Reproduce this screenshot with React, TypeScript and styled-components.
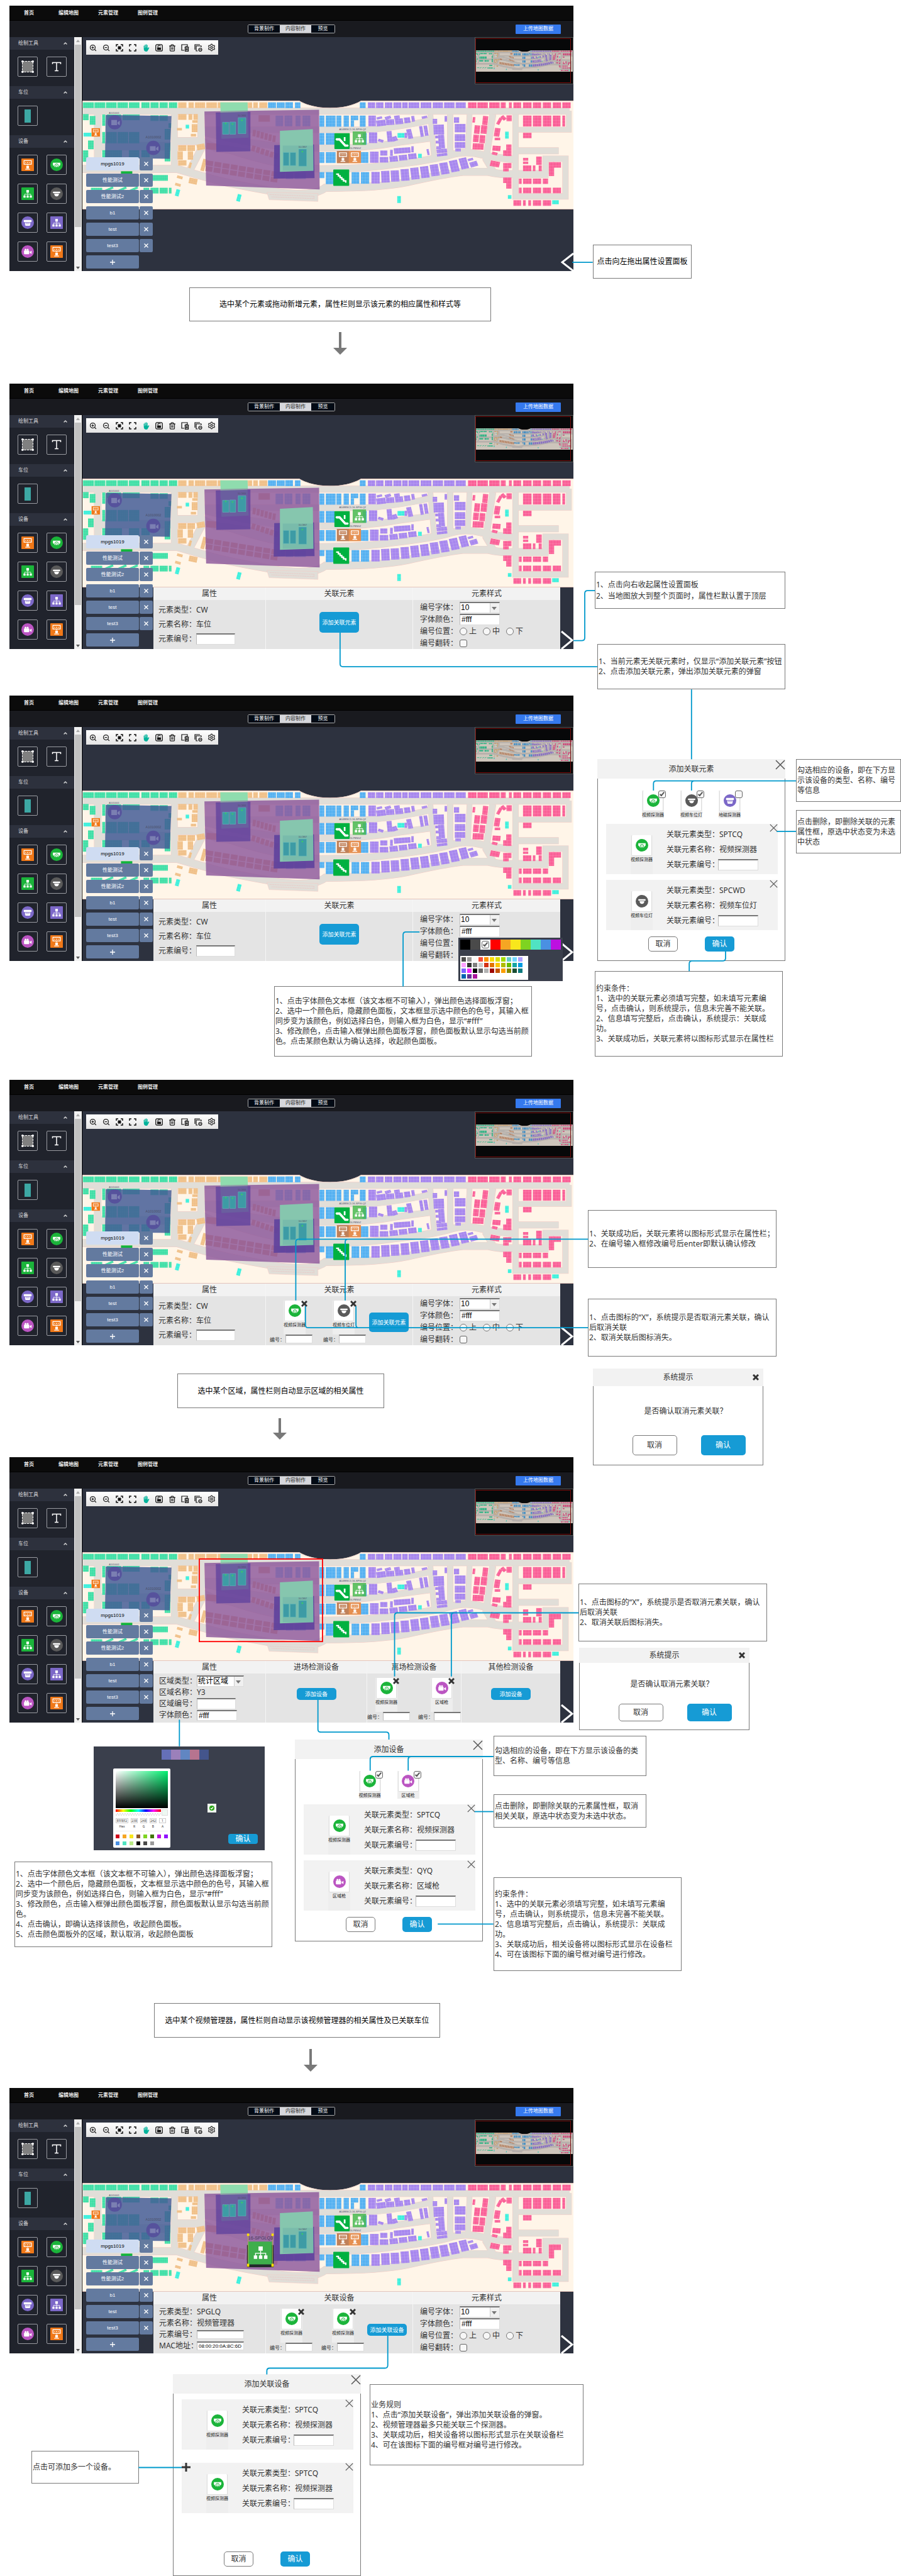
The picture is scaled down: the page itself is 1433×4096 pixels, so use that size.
import React from "react";
import styled, { createGlobalStyle, css } from "styled-components";
import { ChevronUp, Maximize, Settings, Trash2, ZoomIn, ZoomOut } from "lucide-react";

const accent = "#169bd5";
const line = "#0099cc";
const sans = `"Noto Sans", "Noto Sans CJK SC", sans-serif`;
const arial = `"Liberation Sans", "Noto Sans CJK SC", sans-serif`;

const GlobalStyle = createGlobalStyle`
  *, *::before, *::after { box-sizing: border-box; }
  body { margin: 0; background: #fff; font-family: ${sans}; font-size: 12px; line-height: 16px; color: #333; }
  button, input, select { font: inherit; color: inherit; margin: 0; padding: 0; }
  h2, h3, p, fieldset { margin: 0; padding: 0; border: 0; font-size: inherit; font-weight: inherit; }
  svg { display: block; }
`;

/* ---------- board ---------- */

const spaced = css<{ $mt?: number; $ml?: number }>`
  margin-top: ${(p) => p.$mt ?? 0}px;
  margin-left: ${(p) => p.$ml ?? 0}px;
`;

const Board = styled.main`
  position: relative;
  min-width: 1433px;
`;

const Row = styled.div<{ $mt?: number; $ml?: number }>`
  ${spaced}
  display: flex;
  align-items: flex-start;
`;

const Column = styled.div<{ $mt?: number; $ml?: number; $width?: number }>`
  ${spaced}
  display: flex;
  flex-direction: column;
  align-items: flex-start;
  flex: ${(p) => (p.$width ? `0 0 ${p.$width}px` : "1")};
`;

const Connectors = styled.svg`
  position: absolute;
  left: 0;
  top: 0;
  width: 1433px;
  height: 4096px;
  pointer-events: none;
  fill: none;
  stroke: ${line};
  stroke-width: 2;
`;

const NoteBox = styled.div<{ $mt?: number; $ml?: number; $w: number; $h: number; $center?: boolean; $loose?: boolean }>`
  ${spaced}
  display: flex;
  flex-direction: column;
  justify-content: center;
  flex: none;
  width: ${(p) => p.$w}px;
  min-height: ${(p) => p.$h}px;
  padding: 0 1px;
  border: 1px solid #797979;
  background: #fff;
  white-space: nowrap;
  line-height: ${(p) => (p.$loose ? 18 : 16)}px;
  ${(p) => p.$center && "align-items: center; color: #000;"}
`;

type NoteProps = { mt?: number; ml?: number; w: number; h: number; center?: boolean; loose?: boolean; lines: string[] };

const Note = ({ mt, ml, w, h, center, loose, lines }: NoteProps) => (
  <NoteBox $mt={mt} $ml={ml} $w={w} $h={h} $center={center} $loose={loose}>
    {lines.map((text) => (
      <p key={text}>{text}</p>
    ))}
  </NoteBox>
);

const ArrowSvg = styled.svg<{ $mt?: number; $ml?: number }>`
  ${spaced}
  fill: #797979;
`;

const DownArrow = ({ mt, ml, h }: { mt: number; ml: number; h: number }) => (
  <ArrowSvg $mt={mt} $ml={ml} width="22" height={h} viewBox={`0 0 22 ${h}`}>
    <path d={`M9 0H13V${h - 11}H22L11 ${h}L0 ${h - 11}H9Z`} />
  </ArrowSvg>
);

/* ---------- controls ---------- */

const boxed = css`
  border: 1px solid #ddd;
  border-top: 2px solid #777;
  border-left-color: #bbb;
  background: #fff;
`;

const Field = styled.input<{ $w: number; $h?: number; $small?: boolean }>`
  ${boxed}
  width: ${(p) => p.$w}px;
  height: ${(p) => p.$h ?? 18}px;
  padding: 0 2px;
  font-family: ${arial};
  font-size: ${(p) => (p.$small ? 8 : 12)}px;
  color: #000;
`;

const SelectShell = styled.span<{ $w: number }>`
  position: relative;
  display: flex;
  width: ${(p) => p.$w}px;
  &::before {
    content: "";
    position: absolute;
    right: 1px;
    top: 2px;
    width: 15px;
    height: 15px;
    border-left: 1px solid #ccc;
    background: #f0f0f0;
  }
  &::after {
    content: "";
    position: absolute;
    right: 5px;
    top: 8px;
    border: 4px solid transparent;
    border-top: 5px solid #777;
    border-bottom: 0;
  }
`;

const SelectBox = styled.select`
  ${boxed}
  appearance: none;
  width: 100%;
  height: 18px;
  padding: 0 1px;
  border-radius: 0;
  font-family: ${arial};
  line-height: 15px;
  color: #000;
`;

const Select = ({ w, value }: { w: number; value: string }) => (
  <SelectShell $w={w}>
    <SelectBox defaultValue={value}>
      <option>{value}</option>
    </SelectBox>
  </SelectShell>
);

const Radio = styled.input.attrs({ type: "radio" })`
  appearance: none;
  width: 12px;
  height: 12px;
  border: 1px solid #777;
  border-radius: 50%;
  background: #f7f7f7;
`;

const Tick = styled.input.attrs({ type: "checkbox" })`
  appearance: none;
  position: relative;
  width: 12px;
  height: 12px;
  border: 1px solid #666;
  border-radius: 3px;
  background: #f7f7f7;
  &:checked::after {
    content: "";
    position: absolute;
    left: 3px;
    top: 0;
    width: 4px;
    height: 8px;
    border: solid #555;
    border-width: 0 2px 2px 0;
    transform: rotate(40deg);
  }
`;

const Button = styled.button<{ $w: number; $h: number; $plain?: boolean; $small?: boolean; $mt?: number; $ml?: number }>`
  ${spaced}
  flex: none;
  width: ${(p) => p.$w}px;
  height: ${(p) => p.$h}px;
  border: ${(p) => (p.$plain ? "1px solid #797979" : "0")};
  border-radius: 5px;
  background: ${(p) => (p.$plain ? "#fff" : accent)};
  color: ${(p) => (p.$plain ? "#333" : "#fff")};
  font-size: ${(p) => (p.$small ? 9 : 12)}px;
  line-height: 12px;
  white-space: nowrap;
`;

const IconButton = styled.button`
  display: flex;
  border: 0;
  background: none;
`;

const Cross = ({ size }: { size: number }) => (
  <svg width={size} height={size} viewBox="0 0 16 16" stroke="#555" strokeWidth="1.5" fill="none">
    <path d="M1 1L15 15M15 1L1 15" />
  </svg>
);

const HeavyCross = () => (
  <svg width="10" height="10" viewBox="0 0 10 10" stroke="#333" strokeWidth="3" fill="none">
    <path d="M1 1L9 9M9 1L1 9" />
  </svg>
);

/* ---------- device icons ---------- */

type DeviceKind = "kiosk" | "detector" | "manager" | "lamp" | "geo" | "manager2" | "gun";

const Kiosk = () => (
  <g fill="none" stroke="#fff" strokeWidth="1.5">
    <rect x="5" y="4" width="14" height="7" />
    <path d="M7.500 7.500H9M11 7.500H13M15 7.500H16.500" />
    <path d="M9.500 14H14.500V19H9.500Z" fill="#fff" stroke="none" />
    <path d="M7.500 20.500H16.500" />
    <path d="M12 11V13" />
  </g>
);

const Tree = () => (
  <g fill="#fff">
    <path d="M9.500 5H14.500V10H9.500Z" />
    <path d="M4 15.500H8V19.500H4ZM10 15.500H14V19.500H10ZM16 15.500H20V19.500H16Z" />
    <path d="M12 10V16M6 16V13H18V16" fill="none" stroke="#fff" strokeWidth="1" />
  </g>
);

const glyphs: Record<DeviceKind, { color: string; round: boolean; art: React.ReactNode }> = {
  kiosk: { color: "#f07818", round: false, art: <Kiosk /> },
  manager: { color: "#1bb43a", round: false, art: <Tree /> },
  manager2: { color: "#7c68c8", round: false, art: <Tree /> },
  detector: {
    color: "#1bb43a",
    round: true,
    art: (
      <g>
        <path d="M5 8H19V12C19 13 18 13.500 17.500 13.500A6 6 0 0 1 6.500 13.500C6 13.500 5 13 5 12Z" fill="#fff" />
        <circle cx="12" cy="13.500" r="3.200" fill="#fff" stroke="#1bb43a" strokeWidth="1.200" />
        <circle cx="12" cy="13.500" r="1" fill="#1bb43a" />
      </g>
    ),
  },
  lamp: {
    color: "#5a5a5a",
    round: true,
    art: (
      <g fill="#fff">
        <rect x="5" y="8" width="14" height="3" rx="1" />
        <path d="M7.500 12H16.500A4.500 5 0 0 1 7.500 12Z" />
      </g>
    ),
  },
  geo: {
    color: "#7c68c8",
    round: true,
    art: (
      <g fill="#fff">
        <rect x="4.500" y="7" width="15" height="4" rx="1" />
        <path d="M7 12H9V15H10V12H11.500V15H12.500V12H14V15H15V12H17V16L16 18H8L7 16Z" />
      </g>
    ),
  },
  gun: {
    color: "#bb55c2",
    round: true,
    art: (
      <g fill="#fff">
        <rect x="5" y="10" width="10" height="7" rx="1" />
        <circle cx="8" cy="8.500" r="1.800" />
        <circle cx="12" cy="8.500" r="1.800" />
        <path d="M16 12.500L19.500 10.500V16.500L16 14.500Z" />
      </g>
    ),
  },
};

const DeviceIcon = ({ kind, size }: { kind: DeviceKind; size: number }) => (
  <svg width={size} height={size} viewBox="0 0 24 24">
    {glyphs[kind].round ? <circle cx="12" cy="12" r="12" fill={glyphs[kind].color} /> : <rect width="24" height="24" rx="1" fill={glyphs[kind].color} />}
    {glyphs[kind].art}
  </svg>
);

const TileBox = styled.span`
  position: relative;
  display: flex;
  flex-direction: column;
  align-items: center;
  width: 35px;
  background: #eee;
`;

const TileFace = styled.span`
  display: flex;
  align-items: center;
  justify-content: center;
  width: 33px;
  height: 33px;
  border: 1px solid #ddd;
  border-top: 0;
  border-radius: 2px;
  background: #fff;
`;

const TileName = styled.span`
  font-family: ${arial};
  font-size: 7px;
  line-height: 11px;
  white-space: nowrap;
  color: #222;
`;

const TileCorner = styled.span`
  position: absolute;
  right: -3px;
  top: 0;
  display: flex;
`;

const Tile = ({ kind, name, children }: { kind: DeviceKind; name: string; children?: React.ReactNode }) => (
  <TileBox>
    <TileFace>
      <DeviceIcon kind={kind} size={20} />
    </TileFace>
    <TileName>{name}</TileName>
    {children && <TileCorner>{children}</TileCorner>}
  </TileBox>
);

/* ---------- floor map ---------- */

type Block = [number, number, number, number, number?];

const leftGreen: Block[] = [
  [438, 540, 58, 30], [499, 540, 57, 30], [560, 540, 56, 30], [620, 540, 56, 30], [681, 540, 56, 30], [747, 540, 43, 30], [795, 540, 43, 30], [843, 540, 43, 30], [892, 540, 44, 30],
  [438, 602, 30, 32], [474, 612, 30, 46], [540, 604, 16, 60], [565, 604, 75, 30], [648, 604, 90, 30], [795, 608, 43, 30], [843, 608, 43, 30], [890, 650, 14, 25],
  [540, 696, 15, 60], [562, 696, 55, 60], [621, 696, 56, 60], [681, 696, 55, 60], [870, 680, 30, 56], [465, 741, 30, 46], [438, 793, 28, 60], [540, 792, 104, 40],
  [681, 792, 55, 44], [747, 792, 44, 44], [870, 755, 30, 96], [805, 923, 82, 30], [480, 990, 60, 16], [758, 990, 30, 30], [795, 990, 43, 30], [843, 990, 43, 30], [892, 990, 14, 30],
  [550, 992, 50, 12, -25], [620, 992, 50, 12, -25], [680, 992, 50, 12, -25],
];

const leftOrange: Block[] = [
  [941, 540, 44, 30], [996, 540, 28, 30], [1030, 540, 54, 30], [1090, 540, 56, 30], [1150, 540, 160, 30], [1310, 540, 22, 30], [1338, 540, 24, 30], [1370, 540, 42, 30],
  [941, 602, 44, 30], [996, 602, 20, 30], [1022, 602, 23, 30], [1016, 634, 28, 14], [1013, 655, 30, 42], [935, 675, 26, 13], [1008, 706, 28, 14],
  [941, 766, 44, 30], [990, 766, 40, 30], [1040, 760, 42, 30, -10], [938, 798, 28, 44], [992, 798, 28, 44], [941, 845, 44, 28], [998, 857, 13, 30, 15],
  [1066, 838, 20, 64, 15], [935, 928, 30, 14, 15], [925, 967, 30, 14, 15], [998, 940, 44, 30, 12],
];

const overlaidOrange: Block[] = [
  ...Array.from({ length: 9 }, (_, i): Block => [1090 + i * 43, 848 + i * 7, 36, 26, 8]),
  ...Array.from({ length: 9 }, (_, i): Block => [1086 + i * 43, 878 + i * 7, 36, 26, 8]),
  ...Array.from({ length: 6 }, (_, i): Block => [1335 + i * 21, 685 + i * 6, 16, 34, 6]),
  ...Array.from({ length: 6 }, (_, i): Block => [1330 + i * 24, 768 + i * 8, 18, 30, 14]),
  [1366, 608, 60, 34], [1090, 755, 54, 34, 5],
];

const leftBlue: Block[] = [
  [1416, 540, 42, 30], [1462, 540, 42, 30], [1508, 540, 40, 30], [1456, 610, 40, 56], [1504, 610, 40, 56],
  [1466, 905, 40, 34], [1510, 910, 40, 34], [1556, 910, 60, 34],
];

const rightBlue: Block[] = [
  [5, 441, 28, 25], [40, 441, 20, 25], [276, 441, 21, 25],
  [5, 498, 25, 46], [42, 498, 18, 46], [68, 498, 28, 46],
  [129, 498, 18, 48], [152, 498, 36, 48], [191, 498, 18, 48], [217, 498, 19, 48], [243, 498, 27, 20], [243, 518, 12, 28], [276, 498, 21, 48],
  [129, 573, 18, 50], [152, 573, 32, 50], [286, 573, 15, 50], [129, 655, 18, 47], [152, 655, 36, 47], [280, 655, 27, 47],
  [129, 741, 18, 26], [152, 741, 30, 52], [246, 741, 28, 50], [280, 741, 30, 50],
];

const rightPurple: Block[] = [
  [305, 441, 27, 25], [335, 441, 27, 25], [367, 441, 27, 25], [398, 441, 29, 25], [430, 441, 20, 25], [453, 441, 39, 25], [497, 441, 39, 25], [541, 441, 37, 25], [582, 441, 38, 25], [624, 441, 37, 25],
  [307, 498, 27, 46], [336, 517, 34, 26, -8], [337, 503, 20, 10, -15], [371, 514, 30, 24, -3], [404, 511, 29, 24, -6], [437, 506, 22, 24, -8], [464, 500, 11, 24, -8], [367, 501, 22, 12, -18], [401, 498, 20, 14, -8], [501, 500, 20, 10, -15],
  [309, 570, 30, 46], [342, 600, 20, 12, 20], [375, 565, 18, 46, -5], [392, 588, 20, 20, -20], [448, 556, 18, 42, -12], [494, 543, 12, 46, -8], [510, 541, 13, 44, -8], [438, 572, 10, 22],
  [313, 653, 31, 48], [350, 648, 26, 22], [348, 676, 31, 24], [386, 645, 10, 26], [400, 636, 60, 24, -5], [384, 672, 30, 24, -6], [418, 667, 30, 24, -6], [452, 661, 30, 24, -6], [463, 630, 9, 26], [520, 642, 8, 26, -10],
  [318, 740, 30, 50], [354, 736, 30, 50, -2], [389, 734, 30, 48, -3], [425, 728, 30, 50, -4], [461, 722, 30, 50, -6], [497, 716, 30, 50, -7], [533, 708, 30, 50, -8], [568, 700, 30, 50, -10], [604, 690, 30, 50, -12], [640, 680, 28, 48, -14], [668, 682, 20, 10, -18], [676, 696, 28, 22, -18],
  [541, 512, 16, 22], [584, 500, 9, 24], [544, 537, 38, 42, -2], [562, 580, 22, 60, -4], [550, 584, 18, 12], [552, 606, 18, 12], [554, 630, 18, 12], [555, 642, 38, 16, -6], [556, 660, 38, 12, -8],
  [618, 505, 19, 24], [621, 534, 39, 36], [621, 578, 38, 30], [621, 612, 38, 26], [623, 640, 20, 12],
];

const rightPink: Block[] = [
  [669, 441, 31, 25], [703, 441, 38, 25], [746, 441, 38, 25], [788, 441, 18, 25], [818, 441, 10, 25], [834, 441, 28, 25], [869, 441, 31, 25], [905, 441, 30, 25], [941, 441, 30, 25], [977, 441, 30, 25], [1012, 441, 30, 25],
  [686, 504, 9, 24, 5], [722, 500, 19, 38, 5], [692, 540, 20, 36, 5], [716, 540, 22, 36, 5], [688, 580, 20, 32, 4], [711, 582, 20, 34, 4], [686, 618, 40, 26, 3],
  [765, 552, 20, 36, 8], [777, 507, 12, 30, 25], [791, 498, 14, 20, -40], [809, 497, 19, 25], [766, 593, 20, 11], [758, 628, 29, 22, 5], [756, 655, 20, 12, 15], [808, 622, 19, 50], [797, 647, 12, 24],
  [750, 694, 34, 24, 12], [797, 702, 30, 22], [797, 724, 20, 14], [797, 764, 30, 24], [808, 788, 19, 24],
  [869, 498, 31, 47], [905, 498, 31, 47], [941, 498, 31, 47], [977, 498, 28, 47], [1012, 498, 10, 47], [869, 572, 31, 23],
  [869, 680, 19, 12], [869, 696, 19, 10], [917, 674, 20, 36], [869, 712, 30, 25], [905, 712, 9, 25], [926, 712, 11, 25], [977, 698, 30, 24], [963, 698, 19, 60],
  [854, 769, 10, 23], [869, 769, 31, 23], [905, 769, 30, 23], [941, 769, 19, 23], [854, 808, 10, 24], [869, 808, 30, 24], [905, 808, 30, 24], [941, 808, 30, 24], [977, 808, 30, 24],
  [834, 862, 28, 24], [869, 862, 10, 24], [888, 862, 10, 24], [905, 862, 30, 24], [941, 862, 30, 24],
];

const rightCyan: Block[] = [[413, 573, 25, 20], [804, 567, 13, 30], [488, 662, 13, 18], [412, 844, 13, 30], [814, 840, 13, 16], [975, 862, 24, 17]];
const leftCyan: Block[] = [[441, 700, 42, 20], [981, 658, 18, 20], [928, 998, 20, 36, 15], [1252, 1024, 20, 38, 15]];

const Blocks = ({ data, fill }: { data: Block[]; fill: string }) => (
  <g fill={fill}>
    {data.map(([x, y, w, h, turn], i) => (
      <rect key={i} x={x} y={y} width={w} height={h} transform={turn ? `rotate(${turn} ${x + w / 2} ${y + h / 2})` : undefined} />
    ))}
  </g>
);

const roads = [
  { w: 11, d: "M145 195.500H1003" },
  { w: 12, d: "M172 195V292" },
  { w: 14, d: "M172 257H310" },
  { w: 11, d: "M307 195V298" },
  { w: 13, d: "M145 297H312Q350 308 380 316T480 336T573 330Q670 330 718 320Q780 306 815 302H860Q880 306 890 306H966" },
  { w: 13, d: "M312 248H354L380 260Q470 270 540 298" },
  { w: 12, d: "M354 195V262L334 300" },
  { w: 10, d: "M355 228H645Q690 226 757 212" },
  { w: 11, d: "M355 232Q470 262 563 260Q640 262 704 250L757 243" },
  { w: 12, d: "M400 262Q480 290 563 297Q640 297 694 289Q757 282 791 273Q820 264 849 272Q878 278 904 280" },
  { w: 9, d: "M758 201L765 282" },
  { w: 10, d: "M793 201V272" },
  { w: 9, d: "M827 201L824 270" },
  { w: 11, d: "M868 201L856 280L868 300" },
  { w: 10, d: "M908 201V345H996V279H961V306" },
  { w: 11, d: "M908 265H984" },
  { w: 9, d: "M908 228H1002V195" },
];

const MapSymbol = () => (
  <svg width="0" height="0" aria-hidden="true" style={{ position: "absolute" }}>
    <defs>
      {[["green", "#3fdfa6"], ["orange", "#f0c088"], ["blue", "#55b1f1"], ["purple", "#a787ee"], ["pink", "#fa6097"], ["cyan", "#3cf0dc"]].map(([id, color]) => (
        <pattern key={id} id={`lot-${id}`} width="11" height="13" patternUnits="userSpaceOnUse">
          <rect width="11" height="13" fill={color} />
          <path d="M10 0V13M0 12H11" stroke="#fff" strokeOpacity=".3" strokeWidth="1" />
        </pattern>
      ))}
      <clipPath id="floor-clip">
        <path d="M145 177H527C555 194 608 194 636 177H1010V368H145Z" />
      </clipPath>
      <symbol id="floor-map" viewBox="145 177 865 191" preserveAspectRatio="none">
        <g clipPath="url(#floor-clip)">
          <rect x="145" y="177" width="865" height="191" fill="#fff5e8" />
          {roads.map((r) => (
            <path key={r.d} d={r.d} fill="none" stroke="#f3c9c3" strokeWidth={r.w + 1} />
          ))}
          {roads.map((r) => (
            <path key={r.d} d={r.d} fill="none" stroke="#e1ded8" strokeWidth={r.w} />
          ))}
          <path d="M470 338L560 340V354L474 351Z" fill="#e1ded8" stroke="#f3c9c3" strokeWidth=".6" />
          <path d="M475 342L553 345V349L478 346" fill="none" stroke="#f0b5b5" strokeWidth=".6" strokeDasharray="2 1" />
          <g transform="scale(.33333)">
            <Blocks data={leftGreen} fill="url(#lot-green)" />
            <Blocks data={leftOrange} fill="url(#lot-orange)" />
            <Blocks data={overlaidOrange} fill="#e09a70" />
            <Blocks data={leftBlue} fill="url(#lot-blue)" />
            <Blocks data={leftCyan} fill="url(#lot-cyan)" />
          </g>
          <g transform="translate(500 0) scale(.4847 .4082)">
            <Blocks data={rightBlue} fill="url(#lot-blue)" />
            <Blocks data={rightPurple} fill="url(#lot-purple)" />
            <Blocks data={rightPink} fill="url(#lot-pink)" />
            <Blocks data={rightCyan} fill="url(#lot-cyan)" />
          </g>
          <path d="M145 177.500H527C555 194 608 194 636 177.500H1010M145 367.500H1010" fill="none" stroke="#e0bdb5" />
        </g>
      </symbol>
      <symbol id="floor-overlays" viewBox="145 177 865 191" preserveAspectRatio="none">
        <path d="M388 180H436L438 242L390 244Z" fill="#8fdcae" />
        <path d="M360 196L562 193L563 333L363 326Z" fill="#8f5a9c" opacity=".84" />
        <path d="M388 196L436 196L438 242L390 244Z" fill="#8fdcae" opacity=".6" />
        <path d="M380 198L441 196.500V266L381 267Z" fill="#5b3f9c" opacity=".72" />
        <path d="M483 255L553 254L554 313L482 314Z" fill="#5b3f9c" opacity=".85" />
        <path d="M493 230L551 227L552 300L493 302Z" fill="#86c6ae" />
        <path d="M498 256H552V300H498Z" fill="#62a5a5" opacity=".35" />
        <g fill="#3d9ba5" stroke="#67bcbc" strokeWidth=".6">
          <path d="M392 215H403V236H392ZM404.500 214.500H415V236H404.500ZM419.500 207H433V235H419.500ZM499 268H509V291H499ZM511 268H521V291H511ZM526 262H540V292H526Z" />
        </g>
        <g fill="#3cc86a">
          <circle cx="397.500" cy="217" r="1.300" />
          <circle cx="409.500" cy="218" r="1.300" />
          <circle cx="426" cy="211.500" r="1.500" />
          <circle cx="532.500" cy="266.500" r="1.500" />
        </g>
        <path d="M186 202L302 204L299 279L185 278Z" fill="#435a95" opacity=".84" />
        <g fill="#56529c">
          <circle cx="202" cy="215" r="12.500" />
          <circle cx="270" cy="260" r="12.500" />
        </g>
        <g fill="#7b7fb2">
          <path d="M196 211H206V220H196ZM207 215L211 212V220L207 218ZM264 257H274V265H264ZM275 260L279 257V265L275 263Z" />
        </g>
        <g fontFamily="Liberation Sans" textAnchor="middle" fill="#4a4f68">
          <text x="201" y="200.500" fontSize="4">A1010001</text>
          <text x="270" y="243" fontSize="6">A1010002</text>
          <text x="426" y="205" fontSize="3.500">16-CW06</text>
          <text x="533" y="259.500" fontSize="3.500">16-CW07</text>
          <text x="621" y="228.500" fontSize="4.500">A1488SC5 16-SPGLQ2</text>
          <text x="626" y="262.500" fontSize="4">16-PBNGZ</text>
        </g>
        <svg x="161" y="225" width="15" height="15.500" viewBox="0 0 24 24"><rect width="24" height="24" fill="#f07818" /><Kiosk /></svg>
        <rect x="213" y="301" width="20" height="7" fill="#12b53c" />
        <svg x="621" y="231" width="24" height="24" viewBox="0 0 24 24"><rect width="24" height="24" fill="#49b950" opacity=".85" /><Tree /></svg>
        <svg x="593" y="265" width="22" height="22" viewBox="0 0 24 24"><rect width="24" height="24" fill="#c08058" /><Kiosk /></svg>
        <svg x="614" y="265" width="22" height="22" viewBox="0 0 24 24"><rect width="24" height="24" fill="#e58f50" /><Kiosk /></svg>
        <rect x="589" y="234" width="27" height="28" rx="1" fill="#00b140" />
        <path d="M593 245H598L608 256H612" fill="none" stroke="#fff" strokeWidth="4" strokeLinecap="round" />
        <path d="M607 241V248" stroke="#fff" strokeWidth="3" />
        <rect x="587" y="298" width="28" height="28.500" rx="1" fill="#00b140" />
        <path d="M592 306H596V309H599V312H602V315H605V318H609V321" fill="none" stroke="#fff" strokeWidth="2.500" />
      </symbol>
    </defs>
  </svg>
);

/* ---------- editor shell ---------- */

const EditorFrame = styled.section<{ $mt?: number; $ml?: number }>`
  ${spaced}
  display: flex;
  flex-direction: column;
  flex: none;
  width: 897px;
  height: 422px;
  background: #2d323f;
  font-family: ${arial};
  overflow: visible;
`;

const NavBar = styled.nav`
  display: flex;
  align-items: center;
  gap: 31px;
  height: 24px;
  padding-left: 23px;
  background: #0b0b0b;
  border-bottom: 1px solid #000;
`;

const NavLink = styled.a`
  min-width: 24px;
  color: #eee;
  font-size: 8px;
  line-height: 12px;
  font-weight: 700;
  text-decoration: none;
`;

const ModeBar = styled.div`
  display: flex;
  align-items: center;
  justify-content: space-between;
  height: 26px;
  padding: 0 20px 0 379px;
  background: #191a1f;
`;

const Tabs = styled.div`
  display: flex;
  border: 1px solid #aaa;
  border-radius: 2px;
`;

const Tab = styled.button<{ $on?: boolean; $w: number }>`
  width: ${(p) => p.$w}px;
  height: 12px;
  border: 0;
  background: ${(p) => (p.$on ? "#d6d7dc" : "#020a14")};
  color: ${(p) => (p.$on ? "#222" : "#fff")};
  font-size: 8px;
  line-height: 10px;
`;

const Upload = styled.button`
  width: 72px;
  height: 15px;
  border: 0;
  border-radius: 1px;
  background: #3579ee;
  color: #fff;
  font-size: 8px;
  line-height: 10px;
`;

const Workspace = styled.div`
  display: flex;
  flex: 1;
  min-height: 0;
`;

const Sidebar = styled.aside`
  width: 103px;
  background: #20232c;
`;

const GroupTitle = styled.h3`
  display: flex;
  align-items: center;
  justify-content: space-between;
  height: 20px;
  padding: 0 10px 0 14px;
  background: #2d313d;
  color: #ddd;
  font-size: 8px;
  line-height: 12px;
`;

const ToolGrid = styled.div`
  display: grid;
  grid-template-columns: 32px 32px;
  grid-auto-rows: 32px;
  gap: 14px;
  padding: 11px 13px 15px;
`;

const ToolButton = styled.button`
  display: flex;
  align-items: center;
  justify-content: center;
  border: 1px solid #9a9ca2;
  border-radius: 2px;
  background: none;
`;

const ScrollTrack = styled.div`
  display: flex;
  flex-direction: column;
  align-items: center;
  justify-content: space-between;
  width: 12px;
  padding: 4px 0 3px;
  border-right: 1px solid #fff;
  background: #f1f1f1;
`;

const ScrollThumb = styled.div`
  flex: 1;
  width: 10px;
  margin: 4px 0 63px;
  background: #c1c1c1;
`;

const ScrollTip = styled.i<{ $down?: boolean }>`
  border: 3px solid transparent;
  ${(p) => (p.$down ? "border-top: 4px solid #555; border-bottom: 0;" : "border-bottom: 4px solid #aaa; border-top: 0;")}
`;

const Stage = styled.div`
  position: relative;
  flex: 1;
  border-left: 1px solid #000;
`;

const MapLayer = styled.svg`
  position: absolute;
  left: 0;
  top: 101px;
  width: 100%;
  height: 173px;
`;

const Toolbar = styled.div`
  position: absolute;
  left: 6px;
  top: 5px;
  display: flex;
  align-items: center;
  width: 210px;
  height: 23px;
  background: linear-gradient(#fff, #e4e4e4);
`;

const ToolbarButton = styled.button`
  display: flex;
  align-items: center;
  justify-content: center;
  flex: 1;
  height: 23px;
  border: 0;
  background: none;
  color: #222;
`;

const MiniMap = styled.div`
  position: absolute;
  right: 0;
  top: 0;
  display: flex;
  align-items: center;
  width: 157px;
  height: 75px;
  border: 1px solid #555;
  background: #070809;
  &::after {
    content: "";
    position: absolute;
    inset: 1px 3px 1px 0;
    border: 1px solid #7a0d0d;
  }
`;

const MiniSvg = styled.svg`
  width: 100%;
  height: 34px;
  opacity: 0.8;
`;

const Floors = styled.div`
  position: absolute;
  left: 6px;
  bottom: 4px;
  display: grid;
  grid-template-columns: 84px 21px;
  grid-auto-rows: 21px;
  gap: 5px 1px;
`;

const FloorButton = styled.button<{ $on?: boolean }>`
  display: flex;
  align-items: center;
  justify-content: center;
  border: 0;
  border-radius: 2px;
  background: ${(p) => (p.$on ? "#cfdcf2" : "#637a9f")};
  color: ${(p) => (p.$on ? "#000" : "#fff")};
  font-size: 8px;
  line-height: 12px;
`;

const Handle = styled.button`
  position: absolute;
  right: 0;
  bottom: 0;
  width: 20px;
  height: 30px;
  border: 0;
  background: none;
`;

const DetectorHint = ({ d, size = 12 }: { d: string; size?: number }) => (
  <svg width={size} height={size} viewBox="0 0 12 12" fill="none" stroke="currentColor" strokeWidth="1.2">
    <path d={d} />
  </svg>
);

const toolbarItems: [string, React.ReactNode][] = [
  ["放大", <ZoomIn size={12} strokeWidth={2.5} />],
  ["缩小", <ZoomOut size={12} strokeWidth={2.5} />],
  ["居中", <svg width="12" height="12" viewBox="0 0 12 12" fill="none" stroke="#111" strokeWidth="1.500"><path d="M1 4V1H4M8 1H11V4M11 8V11H8M4 11H1V8" /><rect x="3.500" y="3.500" width="5" height="5" fill="#111" stroke="none" /></svg>],
  ["全屏", <svg width="12" height="12" viewBox="0 0 12 12" fill="none" stroke="#111" strokeWidth="1.500"><path d="M1 4V1H4M8 1H11V4M11 8V11H8M4 11H1V8" /></svg>],
  ["拖动", <svg width="12" height="12" viewBox="0 0 12 12" fill="#00b39b"><path d="M2.500 3.200A.6.6 0 0 1 3.700 3V6H4.200V1.500A.6.6 0 0 1 5.400 1.500V5.500H5.900V.9A.6.6 0 0 1 7.100.9V5.500H7.600V1.800A.6.6 0 0 1 8.800 1.800V7L10 5.500A.8.800 0 0 1 11.300 6.300L9 10.500Q8.500 12 6.500 12Q3.500 12 2.800 9Z" /></svg>],
  ["锁定", <svg width="12" height="12" viewBox="0 0 12 12" fill="none" stroke="#111"><rect x=".8" y=".8" width="10.400" height="10.400" rx="2" strokeWidth="1.300" /><rect x="3" y="5.500" width="6" height="4" fill="#111" stroke="none" /><path d="M4.200 5.500V3.800A1.800 1.800 0 0 1 7.800 3.800" strokeWidth="1.200" /></svg>],
  ["删除", <Trash2 size={12} strokeWidth={2.500} />],
  ["删除选区", <svg width="13" height="12" viewBox="0 0 13 12" fill="none" stroke="#111" strokeWidth="1.200"><path d="M5 10H1V1H10V3M5.500 5H12.500M7.500 5V4H10.500V5M6.500 5V11.300H11.500V5M8.200 6.500V10M9.800 6.500V10" /></svg>],
  ["移除图层", <svg width="13" height="12" viewBox="0 0 13 12" fill="none" stroke="#111" strokeWidth="1.200"><path d="M1 9V1H9M5.500 11H3V3H11V5" /><circle cx="9.500" cy="9" r="2.500" /><path d="M8.300 9H10.700" /></svg>],
  ["设置", <Settings size={13} strokeWidth={2.200} />],
];

const floors = ["mpgs1019", "性能测试", "性能测试2", "b1", "test", "test3"];
const palette: [DeviceKind, string][] = [
  ["kiosk", "查询机"], ["detector", "视频探测器"], ["manager", "管理器"], ["lamp", "视频车位灯"],
  ["geo", "地磁探测器"], ["manager2", "节点"], ["gun", "区域枪"], ["kiosk", "终端"],
];

type EditorProps = { mt?: number; ml?: number; open?: boolean; marker?: "area" | "device"; children?: React.ReactNode };

const Editor = ({ mt, ml, open, marker, children }: EditorProps) => (
  <EditorFrame $mt={mt} $ml={ml}>
    <NavBar>
      {["首页", "编辑地图", "元素管理", "图例管理"].map((t) => (
        <NavLink key={t} href="#">{t}</NavLink>
      ))}
    </NavBar>
    <ModeBar>
      <Tabs>
        <Tab $w={50}>背景制作</Tab>
        <Tab $w={50} $on>内容制作</Tab>
        <Tab $w={37}>预览</Tab>
      </Tabs>
      <Upload>上传地图数据</Upload>
    </ModeBar>
    <Workspace>
      <Sidebar>
        <GroupTitle>绘制工具<ChevronUp size={8} strokeWidth={4} /></GroupTitle>
        <ToolGrid>
          <ToolButton aria-label="区域">
            <svg width="20" height="20" viewBox="0 0 20 20">
              <rect x="1.500" y="1.500" width="17" height="17" fill="#808080" stroke="#fff" strokeDasharray="3 1.500" />
              <g fill="#fff"><circle cx="1.800" cy="1.800" r="1.800" /><circle cx="18.200" cy="1.800" r="1.800" /><circle cx="1.800" cy="18.200" r="1.800" /><circle cx="18.200" cy="18.200" r="1.800" /></g>
            </svg>
          </ToolButton>
          <ToolButton aria-label="文字">
            <svg width="16" height="16" viewBox="0 0 16 16" fill="none" stroke="#fff" strokeWidth="1.500">
              <path d="M1.500 4V1.500H14.500V4M8 1.500V14.500M5 14.500H11" />
            </svg>
          </ToolButton>
        </ToolGrid>
        <GroupTitle>车位<ChevronUp size={8} strokeWidth={4} /></GroupTitle>
        <ToolGrid>
          <ToolButton aria-label="车位">
            <svg width="10" height="21" viewBox="0 0 10 21"><rect width="10" height="21" fill="#3da8a4" /></svg>
          </ToolButton>
        </ToolGrid>
        <GroupTitle>设备<ChevronUp size={8} strokeWidth={4} /></GroupTitle>
        <ToolGrid>
          {palette.map(([kind, name]) => (
            <ToolButton key={name} aria-label={name}>
              <DeviceIcon kind={kind} size={20} />
            </ToolButton>
          ))}
        </ToolGrid>
      </Sidebar>
      <ScrollTrack>
        <ScrollTip />
        <ScrollThumb />
        <ScrollTip $down />
      </ScrollTrack>
      <Stage>
        <MapLayer viewBox="145 177 865 191" preserveAspectRatio="none">
          <use href="#floor-map" x="145" y="177" width="865" height="191" />
          <use href="#floor-overlays" x="145" y="177" width="865" height="191" />
          {marker === "area" && <rect x="351" y="189" width="217" height="145" fill="none" stroke="#f00" strokeWidth="2" />}
          {marker === "device" && (
            <g>
              <rect x="435" y="286" width="47" height="39" fill="#222a2a" />
              <rect x="437" y="280" width="42" height="40" fill="#3fae4c" />
              <svg x="441" y="281" width="36" height="36" viewBox="0 0 24 24"><Tree /></svg>
              <path d="M437 266V322M480 266V322" stroke="#b6b04c" strokeWidth="1" />
              <path d="M435 266H439V270H435ZM478 266H482V270H478ZM435 319H439V324H435ZM478 319H482V324H478Z" fill="#ffe000" />
              <text x="459" y="276" fontFamily="Liberation Sans" fontSize="8" textAnchor="middle" fill="#43385c">16-SPGLQ3</text>
            </g>
          )}
        </MapLayer>
        <Toolbar>
          {toolbarItems.map(([name, icon]) => (
            <ToolbarButton key={name} aria-label={name}>{icon}</ToolbarButton>
          ))}
        </Toolbar>
        <MiniMap>
          <MiniSvg viewBox="0 0 157 34" preserveAspectRatio="none">
            <use href="#floor-map" width="157" height="34" />
          </MiniSvg>
        </MiniMap>
        <Floors>
          {floors.map((name, i) => (
            <React.Fragment key={name}>
              <FloorButton $on={i === 0}>{name}</FloorButton>
              <FloorButton aria-label={`删除 ${name}`}>
                <svg width="7" height="7" viewBox="0 0 7 7" stroke="#fff" strokeWidth="1.300"><path d="M.5.500L6.500 6.500M6.500.500L.5 6.500" /></svg>
              </FloorButton>
            </React.Fragment>
          ))}
          <FloorButton aria-label="新增">
            <svg width="8" height="8" viewBox="0 0 8 8" stroke="#fff" strokeWidth="1.300"><path d="M4 0V8M0 4H8" /></svg>
          </FloorButton>
        </Floors>
        {children}
        <Handle aria-label={open ? "收起" : "展开"}>
          <svg width="20" height="30" viewBox="0 0 20 30" fill="none" stroke="#fff" strokeWidth="3">
            <path d={open ? "M1 2L18 16L1 30" : "M20 2L2 16L20 30"} />
          </svg>
        </Handle>
      </Stage>
    </Workspace>
  </EditorFrame>
);

/* ---------- property panel ---------- */

const Panel = styled.div<{ $cols: string }>`
  position: absolute;
  left: 113px;
  bottom: 0;
  display: grid;
  grid-template-columns: ${(p) => p.$cols};
  width: 647px;
  height: 98px;
  font-family: ${sans};
`;

const PanelColumn = styled.section`
  display: flex;
  flex-direction: column;
  background: #e4e4e4;
  & + & { border-left: 1px solid #f5f5f5; }
`;

const PanelTitle = styled.h3`
  height: 20px;
  background: #f2f2f2;
  line-height: 20px;
  text-align: center;
`;

const Lines = styled.div<{ $row: number; $pad: number; $left: number }>`
  position: relative;
  display: grid;
  grid-auto-rows: ${(p) => p.$row}px;
  align-items: center;
  padding: ${(p) => p.$pad}px 0 0 ${(p) => p.$left}px;
  white-space: nowrap;
`;

const LineRow = styled.label`
  display: flex;
  align-items: center;
  > span:first-child { flex: none; width: 60px; }
`;

const StyleRow = styled(LineRow)`
  > span:first-child { width: 63px; }
`;

const Choices = styled.fieldset`
  display: flex;
  align-items: center;
  > span { width: 63px; }
  label { display: flex; align-items: center; gap: 3px; width: 37px; }
`;

const Slots = styled.div<{ $pad: number; $gap: number }>`
  display: flex;
  gap: ${(p) => p.$gap}px;
  padding: 7px 0 0 ${(p) => p.$pad}px;
`;

const Slot = styled.div`
  display: flex;
  flex-direction: column;
  width: 68px;
`;

const SlotTile = styled.div<{ $shift: number }>`
  display: flex;
  height: 54px;
  padding-left: ${(p) => p.$shift}px;
`;

const SlotNumber = styled.label`
  display: flex;
  align-items: center;
  justify-content: space-between;
  font-size: 8px;
  line-height: 13px;
  white-space: nowrap;
`;

const Linked = ({ kind, name, shift }: { kind: DeviceKind; name: string; shift: number }) => (
  <Slot>
    <SlotTile $shift={shift}>
      <Tile kind={kind} name={name}>
        <IconButton aria-label="取消关联"><HeavyCross /></IconButton>
      </Tile>
    </SlotTile>
    <SlotNumber>
      编号：<Field $w={43} $h={14} $small />
    </SlotNumber>
  </Slot>
);

const Centered = styled.div`
  display: flex;
  justify-content: center;
`;

const StyleColumn = ({ name, children }: { name: string; children?: React.ReactNode }) => (
  <PanelColumn>
    <PanelTitle>元素样式</PanelTitle>
    <Lines $row={19} $pad={2} $left={11}>
      <StyleRow><span>编号字体：</span><Select w={64} value="10" /></StyleRow>
      <StyleRow><span>字体颜色：</span><Field $w={64} defaultValue="#fff" /></StyleRow>
      <Choices>
        <span>编号位置：</span>
        {["上", "中", "下"].map((t) => (
          <label key={t}><Radio name={`place-${name}`} />{t}</label>
        ))}
      </Choices>
      <StyleRow><span>编号翻转：</span><Tick /></StyleRow>
      {children}
    </Lines>
  </PanelColumn>
);

const ElementColumn = () => (
  <PanelColumn>
    <PanelTitle>属性</PanelTitle>
    <Lines $row={23} $pad={4} $left={8}>
      <p>元素类型：CW</p>
      <p>元素名称：车位</p>
      <LineRow><span>元素编号：</span><Field $w={62} /></LineRow>
    </Lines>
  </PanelColumn>
);

const threeCols = "178px 234px 1fr";

/* ---------- colour popup ---------- */

const ColorPopup = styled.div`
  position: absolute;
  z-index: 1;
  left: 72px;
  top: 41px;
  display: flex;
  flex-direction: column;
  align-items: flex-start;
  gap: 10px;
  width: 166px;
  height: 69px;
  padding: 3px;
  background: #3a3f4c;
`;

const WideSwatches = styled.div`
  display: flex;
`;

const Swatch = styled.span<{ $c: string; $w: number; $h: number }>`
  display: flex;
  align-items: center;
  justify-content: center;
  width: ${(p) => p.$w}px;
  height: ${(p) => p.$h}px;
  background: ${(p) => p.$c};
`;

const SmallSwatches = styled.div`
  display: grid;
  grid-template-columns: repeat(11, 7px);
  grid-auto-rows: 7px;
  gap: 2px;
  width: 108px;
  height: 38px;
  padding: 2px;
  background: #fff;
`;

const wide = ["#000", "#4a4a4a", "#fff", "#f00", "#f5a623", "#f8e71c", "#7ed321", "#50e3c2", "#4a90e2", "#bd10e0"];
const small = [
  "#4d4d4d", "#999", "#f8f8f8", "#f44e3b", "#fe9200", "#fcdc00", "#dbdf00", "#a4dd00", "#68ccca", "#73d8ff", "#aea1ff",
  "#fda1ff", "#333", "#808080", "#ccc", "#d33115", "#e27300", "#fcc400", "#b0bc00", "#68bc00", "#16a5a5", "#009ce0",
  "#7b64ff", "#fa28ff", "#000", "#666", "#b3b3b3", "#9f0500", "#c45100", "#fb9e00", "#808900", "#194d33", "#0c797d",
  "#0062b1", "#653294", "#ab149e",
];

const PickerPanel = styled.div<{ $mt?: number; $ml?: number }>`
  ${spaced}
  width: 272px;
  height: 165px;
  padding-top: 5px;
  background: #3a3f4c;
`;

const Strip = styled.div`
  display: flex;
  margin-left: 108px;
`;

const PickerRow = styled.div`
  display: flex;
  align-items: flex-end;
  padding: 14px 0 0 31px;
`;

const PickerCard = styled.div`
  display: flex;
  flex-direction: column;
  width: 91px;
  height: 126px;
  padding: 4px;
  border-radius: 2px;
  background: #fff;
  font-size: 5px;
  line-height: 6px;
`;

const Shade = styled.div`
  height: 61px;
  background: linear-gradient(to top, #000, transparent), linear-gradient(to right, #fff, #00f070);
`;

const Bars = styled.div`
  display: grid;
  grid-template-columns: 72px 10px;
  grid-template-rows: 4px 4px;
  gap: 2px 1px;
  padding-top: 2px;
`;

const Hue = styled.div`
  background: linear-gradient(to right, #f00, #ff0, #0f0, #0ff, #00f, #f0f, #f00);
`;

const Preview = styled.div`
  grid-row: span 2;
  border: 1px solid #ddd;
  background: #eef8f2;
`;

const Alpha = styled.div`
  background: repeating-conic-gradient(#e4e4e4 0 25%, #fff 0 50%) 0 0 / 4px 4px;
`;

const Codes = styled.div`
  display: grid;
  grid-template-columns: 20px 11px 11px 11px 11px;
  gap: 4px;
  padding: 4px 0;
  text-align: center;
  label { display: block; }
`;

const Code = styled.input`
  display: block;
  width: 100%;
  height: 8px;
  margin-bottom: 2px;
  border: 1px solid #ccc;
  font-size: 5px;
  text-align: center;
`;

const Presets = styled.div`
  display: grid;
  grid-template-columns: repeat(8, 6px);
  grid-auto-rows: 6px;
  gap: 5px;
  padding-top: 5px;
  border-top: 1px solid #eee;
`;

const CheckBadge = styled.span`
  display: flex;
  align-items: center;
  justify-content: center;
  width: 14px;
  height: 14px;
  margin: 0 19px 56px 59px;
  background: #eef5ee;
`;

const presets = ["#d0021b", "#f5a623", "#f8e71c", "#8b572a", "#7ed321", "#417505", "#bd10e0", "#9013fe", "#4a90e2", "#50e3c2", "#b8e986", "#000", "#4a4a4a", "#9b9b9b", "#fff"];

const ColorPicker = () => (
  <PickerPanel $mt={26} $ml={149}>
    <Strip>
      {["#6570b8", "#9b80ba", "#6186c2", "#b6748f", "#44558c"].map((c) => (
        <Swatch key={c} $c={c} $w={15} $h={16} />
      ))}
    </Strip>
    <PickerRow>
      <PickerCard>
        <Shade />
        <Bars><Hue /><Preview /><Alpha /></Bars>
        <Codes>
          {[["Hex", "EFF8F2"], ["R", "238"], ["G", "248"], ["B", "242"], ["A", "1"]].map(([k, v]) => (
            <label key={k}><Code defaultValue={v} />{k}</label>
          ))}
        </Codes>
        <Presets>
          {presets.map((c) => (
            <Swatch key={c} $c={c} $w={6} $h={6} />
          ))}
        </Presets>
      </PickerCard>
      <CheckBadge>
        <svg width="8" height="8" viewBox="0 0 8 8"><circle cx="4" cy="4" r="4" fill="#2aa515" /><path d="M2 4L3.500 5.500L6 2.500" fill="none" stroke="#fff" strokeWidth="1.200" /></svg>
      </CheckBadge>
      <PickerConfirm>确认</PickerConfirm>
    </PickerRow>
  </PickerPanel>
);

const PickerConfirm = styled.button`
  width: 47px;
  height: 16px;
  margin-bottom: 6px;
  border: 0;
  border-radius: 4px;
  background: ${accent};
  color: #fff;
  line-height: 12px;
`;

/* ---------- dialogs ---------- */

const DialogBox = styled.section<{ $mt?: number; $ml?: number; $w: number; $h: number }>`
  ${spaced}
  display: flex;
  flex-direction: column;
  flex: none;
  width: ${(p) => p.$w}px;
  min-height: ${(p) => p.$h}px;
  border: 1px solid #797979;
  border-top: 0;
  background: #fff;
`;

const DialogHead = styled.header<{ $h: number }>`
  position: relative;
  height: ${(p) => p.$h}px;
  margin: 0 -1px;
  background: #f2f2f2;
  line-height: ${(p) => p.$h}px;
  text-align: center;
`;

const Corner = styled.span<{ $right?: number; $top?: number }>`
  position: absolute;
  right: ${(p) => p.$right ?? 0}px;
  top: ${(p) => p.$top ?? 0}px;
`;

const PickRow = styled.div`
  display: flex;
  justify-content: center;
  gap: 26px;
  padding-top: 19px;
`;

const CardList = styled.div<{ $gap: number }>`
  display: flex;
  flex-direction: column;
  gap: ${(p) => p.$gap}px;
  padding: 9px 11px 0 13px;
`;

const Card = styled.article`
  position: relative;
  display: flex;
  height: 80px;
  padding: 18px 0 0 39px;
  background: #f2f2f2;
`;

const CardLines = styled.div`
  display: grid;
  grid-auto-rows: 24px;
  align-items: center;
  margin: -13px 0 0 22px;
  white-space: nowrap;
`;

const CardField = styled.label`
  display: flex;
  align-items: center;
  > span { width: 82px; }
`;

const Actions = styled.div<{ $gap: number; $bottom: number; $left?: number }>`
  display: flex;
  justify-content: center;
  gap: ${(p) => p.$gap}px;
  margin-top: auto;
  padding: 0 0 ${(p) => p.$bottom}px ${(p) => p.$left ?? 0}px;
`;

const PlusMark = styled.button`
  position: absolute;
  left: 0;
  top: 0;
  display: flex;
  border: 0;
  background: none;
`;

type Device = { kind: DeviceKind; name: string; code: string; plus?: boolean };

const detector: Device = { kind: "detector", name: "视频探测器", code: "SPTCQ" };
const lamp: Device = { kind: "lamp", name: "视频车位灯", code: "SPCWD" };
const gun: Device = { kind: "gun", name: "区域枪", code: "QYQ" };
const geo: Device = { kind: "geo", name: "地磁探测器", code: "DCTCQ" };

type LinkDialogProps = { mt?: number; ml?: number; title: string; picks?: [Device, boolean][]; cards: Device[]; gap?: number };

const LinkDialog = ({ mt, ml, title, picks, cards, gap = 9 }: LinkDialogProps) => (
  <DialogBox $mt={mt} $ml={ml} $w={299} $h={321}>
    <DialogHead $h={31}>
      <h2>{title}</h2>
      <Corner $top={1}><IconButton aria-label="关闭"><Cross size={16} /></IconButton></Corner>
    </DialogHead>
    {picks && (
      <PickRow>
        {picks.map(([d, on]) => (
          <label key={d.code}>
            <Tile kind={d.kind} name={d.name}><Tick defaultChecked={on} /></Tile>
          </label>
        ))}
      </PickRow>
    )}
    <CardList $gap={gap}>
      {cards.map((d, i) => (
        <Card key={i}>
          <Tile kind={d.kind} name={d.name} />
          <CardLines>
            <p>关联元素类型：{d.code}</p>
            <p>关联元素名称：{d.name}</p>
            <CardField><span>关联元素编号：</span><Field $w={64} /></CardField>
          </CardLines>
          <Corner><IconButton aria-label="删除"><Cross size={13} /></IconButton></Corner>
          {d.plus && (
            <PlusMark aria-label="添加">
              <svg width="14" height="14" viewBox="0 0 14 14" stroke="#333" strokeWidth="3"><path d="M7 0V14M0 7H14" /></svg>
            </PlusMark>
          )}
        </Card>
      ))}
    </CardList>
    <Actions $gap={43} $bottom={14}>
      <Button $w={47} $h={24} $plain>取消</Button>
      <Button $w={47} $h={24}>确认</Button>
    </Actions>
  </DialogBox>
);

const Question = styled.p<{ $mt: number }>`
  margin-top: ${(p) => p.$mt}px;
  padding-left: 24px;
  text-align: center;
`;

const ConfirmDialog = ({ mt, ml, compact }: { mt: number; ml: number; compact?: boolean }) => (
  <DialogBox $mt={mt} $ml={ml} $w={271} $h={compact ? 131 : 154}>
    <DialogHead $h={compact ? 24 : 28}>
      <h2>系统提示</h2>
      <Corner $right={7} $top={compact ? 7 : 9}><IconButton aria-label="关闭"><HeavyCross /></IconButton></Corner>
    </DialogHead>
    <Question $mt={compact ? 26 : 32}>是否确认取消元素关联？</Question>
    <Actions $gap={38} $bottom={compact ? 13 : 15} $left={34}>
      <Button $w={71} $h={compact ? 28 : 32} $plain>取消</Button>
      <Button $w={71} $h={compact ? 28 : 32}>确认</Button>
    </Actions>
  </DialogBox>
);

/* ---------- page ---------- */

const cancelNote = ["1、点击图标的“X”，系统提示是否取消元素关联，确认", "后取消关联", "2、取消关联后图标消失。"];
const colorNote = [
  "1、点击字体颜色文本框（该文本框不可输入），弹出颜色选择面板浮窗；",
  "2、选中一个颜色后，隐藏颜色面板，文本框显示选中颜色的色号，其输入框",
  "同步变为该颜色，例如选择白色，则输入框为白色，显示“#fff”",
  "3、修改颜色，点击输入框弹出颜色面板浮窗，颜色面板默认显示勾选当前颜",
];
const ruleNote = [
  "约束条件：",
  "1、选中的关联元素必须填写完整，如未填写元素编",
  "号，点击确认，则系统提示，信息未完善不能关联。",
  "2、信息填写完整后，点击确认，系统提示：关联成",
  "功。",
];

const wires = [
  "M1008 462H1044",
  "M1010 1128H1025Q1030 1128 1030 1123V1045Q1030 1040 1035 1040H1048",
  "M599 1114V1169Q599 1174 604 1174H1052",
  "M1218 1214V1337",
  "M1151 1392V1380Q1151 1375 1156 1375H1402M1218 1392V1380Q1218 1375 1223 1375",
  "M1368 1464H1402",
  "M1278 1675V1687Q1278 1692 1273 1692H1219Q1214 1692 1214 1697V1710",
  "M739 1641H715Q710 1641 710 1646V1737",
  "M521 2290V2187Q521 2182 526 2182H1036M608 2290V2187Q608 2182 613 2182",
  "M538 2300V2333Q538 2338 543 2338H1036M627 2300V2333Q627 2338 632 2338",
  "M316 3028V3075",
  "M560 2993V3045Q560 3050 565 3050H680Q685 3050 685 3055V3063",
  "M695 2952V2845Q695 2840 700 2840H1019M795 2952V2845Q795 2840 800 2840",
  "M652 3118V3098Q652 3093 657 3093H869M719 3118V3098Q719 3093 724 3093",
  "M836 3190H869",
  "M771 3388H869",
  "M683 4113V4165Q683 4170 678 4170H475Q470 4170 470 4175V4181",
  "M244 4345H320",
];

export default function App() {
  return (
    <Board>
      <GlobalStyle />
      <MapSymbol />
      <Row>
        <Column $width={912}>
          <Editor mt={9} ml={15} />
          <Note mt={26} ml={301} w={480} h={54} center lines={["选中某个元素或拖动新增元素，属性栏则显示该元素的相应属性和样式等"]} />
          <DownArrow mt={17} ml={530} h={36} />
          <Editor mt={46} ml={15} open>
            <Panel $cols={threeCols}>
              <ElementColumn />
              <PanelColumn>
                <PanelTitle>关联元素</PanelTitle>
                <Centered><Button $w={63} $h={33} $mt={19} $small>添加关联元素</Button></Centered>
              </PanelColumn>
              <StyleColumn name="linked" />
            </Panel>
          </Editor>
          <Editor mt={74} ml={15} open>
            <Panel $cols={threeCols}>
              <ElementColumn />
              <PanelColumn>
                <PanelTitle>关联元素</PanelTitle>
                <Centered><Button $w={63} $h={33} $mt={19} $small>添加关联元素</Button></Centered>
              </PanelColumn>
              <StyleColumn name="colored">
                <ColorPopup>
                  <WideSwatches>
                    {wide.map((c) => (
                      <Swatch key={c} $c={c} $w={16} $h={16}>{c === "#fff" && <Tick defaultChecked aria-label="白色" />}</Swatch>
                    ))}
                  </WideSwatches>
                  <SmallSwatches>
                    {small.map((c) => (
                      <Swatch key={c} $c={c} $w={7} $h={7} />
                    ))}
                  </SmallSwatches>
                </ColorPopup>
              </StyleColumn>
            </Panel>
          </Editor>
          <Note mt={40} ml={436} w={410} h={112} lines={[...colorNote, "色。点击某颜色默认为确认选择，收起颜色面板。"]} />
          <Editor mt={37} ml={15} open>
            <Panel $cols={threeCols}>
              <ElementColumn />
              <PanelColumn>
                <PanelTitle>关联元素</PanelTitle>
                <Row>
                  <Slots $pad={6} $gap={17}>
                    <Linked kind="detector" name="视频探测器" shift={22} />
                    <Linked kind="lamp" name="视频车位灯" shift={15} />
                  </Slots>
                  <Button $w={63} $h={31} $mt={26} $ml={5} $small>添加关联元素</Button>
                </Row>
              </PanelColumn>
              <StyleColumn name="done" />
            </Panel>
          </Editor>
          <Note mt={45} ml={282} w={329} h={55} center lines={["选中某个区域，属性栏则自动显示区域的相关属性"]} />
          <DownArrow mt={16} ml={434} h={34} />
          <Editor mt={28} ml={15} open marker="area">
            <Panel $cols="178px 161px 150px 1fr">
              <PanelColumn>
                <PanelTitle>属性</PanelTitle>
                <Lines $row={18} $pad={3} $left={9}>
                  <LineRow><span>区域类型：</span><Select w={75} value="统计区域" /></LineRow>
                  <p>区域名称：Y3</p>
                  <LineRow><span>区域编号：</span><Field $w={62} /></LineRow>
                  <LineRow><span>字体颜色：</span><Field $w={64} $h={17} defaultValue="#fff" /></LineRow>
                </Lines>
              </PanelColumn>
              <PanelColumn>
                <PanelTitle>进场检测设备</PanelTitle>
                <Centered><Button $w={63} $h={19} $mt={23} $small>添加设备</Button></Centered>
              </PanelColumn>
              <PanelColumn>
                <PanelTitle>离场检测设备</PanelTitle>
                <Slots $pad={0} $gap={13}>
                  <Linked kind="detector" name="视频探测器" shift={13} />
                  <Linked kind="gun" name="区域枪" shift={20} />
                </Slots>
              </PanelColumn>
              <PanelColumn>
                <PanelTitle>其他检测设备</PanelTitle>
                <Centered><Button $w={63} $h={19} $mt={23} $small>添加设备</Button></Centered>
              </PanelColumn>
            </Panel>
          </Editor>
        </Column>
        <Column>
          <Note mt={389} ml={31} w={157} h={54} center lines={["点击向左拖出属性设置面板"]} />
          <Note mt={466} ml={34} w={303} h={59} loose lines={["1、点击向右收起属性设置面板", "2、当地图放大到整个页面时，属性栏默认置于顶层"]} />
          <Note mt={56} ml={38} w={299} h={72} lines={["1、当前元素无关联元素时，仅显示“添加关联元素”按钮", "2、点击添加关联元素，弹出添加关联元素的弹窗"]} />
          <Row $mt={111} $ml={38}>
            <LinkDialog title="添加关联元素" picks={[[detector, true], [lamp, true], [geo, false]]} cards={[detector, lamp]} />
            <Column $ml={17}>
              <Note w={167} h={68} lines={["勾选相应的设备，即在下方显", "示该设备的类型、名称、编号", "等信息"]} />
              <Note mt={13} w={167} h={69} lines={["点击删除，即删除关联的元素", "属性框，原选中状态变为未选", "中状态"]} />
            </Column>
          </Row>
          <Note mt={16} ml={34} w={299} h={136} lines={[...ruleNote, "3、关联成功后，关联元素将以图标形式显示在属性栏"]} />
          <Note mt={244} ml={23} w={300} h={92} lines={["1、关联成功后，关联元素将以图标形式显示在属性栏；", "2、在编号输入框修改编号后enter即默认确认修改"]} />
          <Note mt={49} ml={23} w={300} h={92} lines={cancelNote} />
          <ConfirmDialog mt={19} ml={31} />
          <Note mt={188} ml={8} w={300} h={92} lines={cancelNote} />
          <ConfirmDialog mt={10} ml={9} compact />
        </Column>
      </Row>
      <Row>
        <Column $width={433}>
          <ColorPicker />
          <Note mt={18} ml={23} w={410} h={136} lines={[...colorNote, "色。", "4、点击确认，即确认选择该颜色，收起颜色面板。", "5、点击颜色面板外的区域，默认取消，收起颜色面板"]} />
        </Column>
        <LinkDialog mt={15} ml={36} title="添加设备" picks={[[detector, true], [gun, true]]} cards={[detector, gun]} />
        <Column $mt={9} $ml={17}>
          <Note w={243} h={64} lines={["勾选相应的设备，即在下方显示该设备的类", "型、名称、编号等信息"]} />
          <Note mt={29} w={243} h={53} lines={["点击删除，即删除关联的元素属性框，取消", "相关关联，原选中状态变为未选中状态。"]} />
          <Note mt={79} w={299} h={149} lines={[...ruleNote, "3、关联成功后，相关设备将以图标形式显示在设备栏", "4、可在该图标下面的编号框对编号进行修改。"]} />
        </Column>
      </Row>
      <Note mt={51} ml={245} w={455} h={55} center lines={["选中某个视频管理器，属性栏则自动显示该视频管理器的相关属性及已关联车位"]} />
      <DownArrow mt={18} ml={483} h={36} />
      <Editor mt={26} ml={15} open marker="device">
        <Panel $cols={threeCols}>
          <PanelColumn>
            <PanelTitle>属性</PanelTitle>
            <Lines $row={18} $pad={3} $left={9}>
              <p>元素类型：SPGLQ</p>
              <p>元素名称：视频管理器</p>
              <LineRow><span>元素编号：</span><Field $w={75} $h={14} $small /></LineRow>
              <LineRow><span>MAC地址：</span><Field $w={75} $h={14} $small defaultValue="08:00:20:0A:8C:6D" /></LineRow>
            </Lines>
          </PanelColumn>
          <PanelColumn>
            <PanelTitle>关联设备</PanelTitle>
            <Row>
              <Slots $pad={6} $gap={14}>
                <Linked kind="detector" name="视频探测器" shift={17} />
                <Linked kind="detector" name="视频探测器" shift={17} />
              </Slots>
              <Button $w={63} $h={19} $mt={31} $ml={5} $small>添加关联设备</Button>
            </Row>
          </PanelColumn>
          <StyleColumn name="manager" />
        </Panel>
      </Editor>
      <Row $mt={33}>
        <Note mt={122} ml={50} w={171} h={52} lines={["点击可添加多一个设备。"]} />
        <LinkDialog ml={54} title="添加关联设备" cards={[detector, { ...detector, plus: true }]} gap={21} />
        <Note mt={16} ml={14} w={340} h={129} lines={["业务规则", "1、点击“添加关联设备”，弹出添加关联设备的弹窗。", "2、视频管理器最多只能关联三个探测器。", "3、关联成功后，相关设备将以图标形式显示在关联设备栏", "4、可在该图标下面的编号框对编号进行修改。"]} />
      </Row>
      <Connectors viewBox="0 0 1587 4536" preserveAspectRatio="none">
        {wires.map((d) => (
          <path key={d} d={d} />
        ))}
      </Connectors>
    </Board>
  );
}
